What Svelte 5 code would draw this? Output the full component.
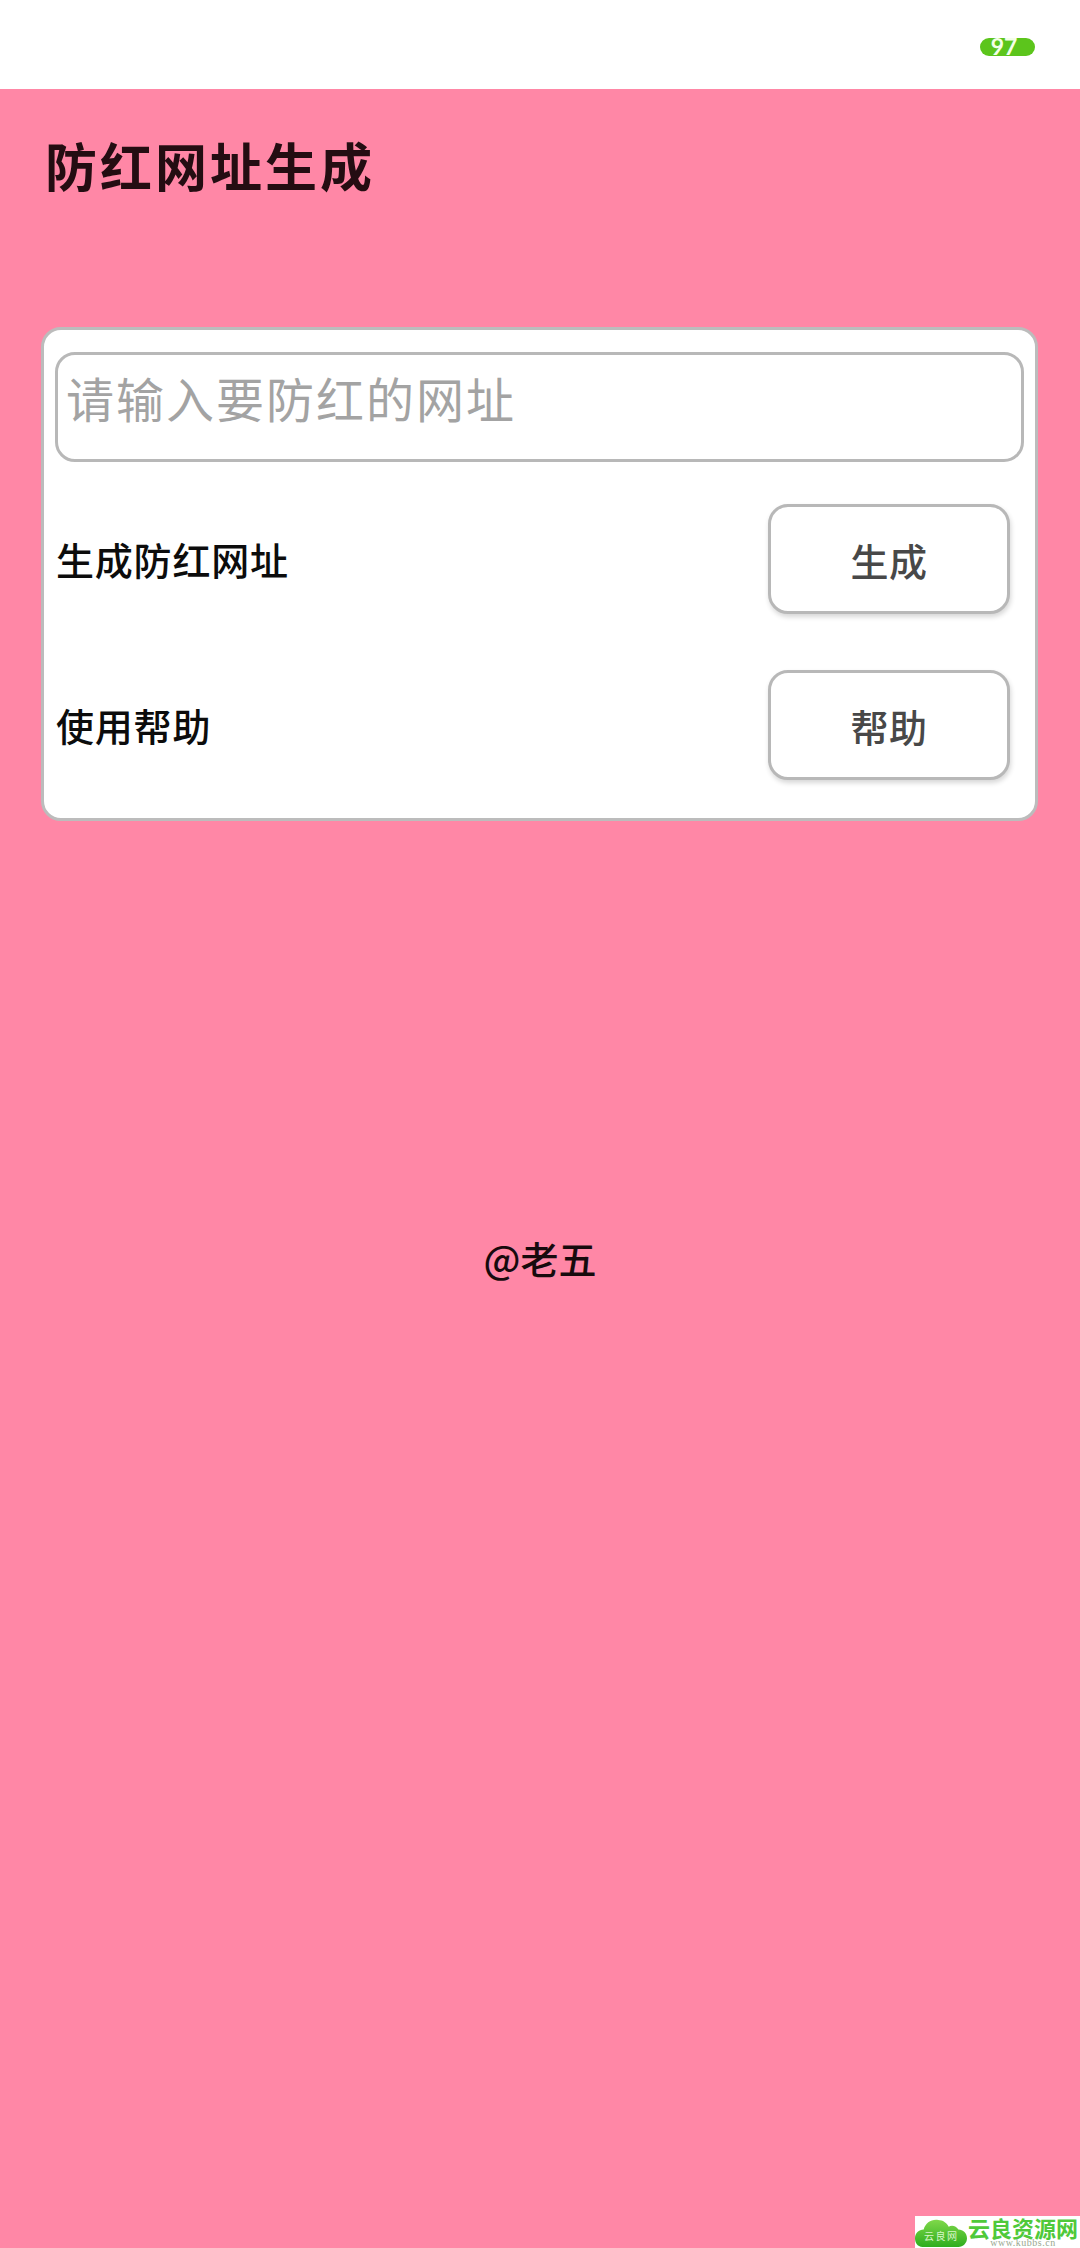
<script>
  let url = "";
</script>

<div class="page">
  <div class="status">
    <span class="battery">97</span>
  </div>

  <h1 class="title">防红网址生成</h1>

  <div class="card">
    <input class="url" type="text" placeholder="请输入要防红的网址" bind:value={url} />
    <div class="row first">
      <span class="label">生成防红网址</span>
      <button class="btn">生成</button>
    </div>
    <div class="row">
      <span class="label">使用帮助</span>
      <button class="btn">帮助</button>
    </div>
  </div>

  <p class="credit">@老五</p>

  <div class="mark">
    <div class="cloud">
      <svg width="54" height="32" viewBox="0 0 54 32">
        <defs>
          <linearGradient id="cl" x1="0" y1="0" x2="0" y2="1">
            <stop offset="0" stop-color="#7fd84a" />
            <stop offset="1" stop-color="#2fae1e" />
          </linearGradient>
        </defs>
        <path d="M8 31C2 31 0 26 0 22C0 17 4 13 9 13C11 6 17 2 24 3C29 3 33 6 35 10C38 8 43 9 45 13C50 13 54 17 54 22C54 27 50 31 45 31Z" fill="url(#cl)" />
      </svg>
      <span class="cloud-text">云良网</span>
    </div>
    <div class="brand">
      <span class="brand-name">云良资源网</span>
      <span class="brand-url">www.kubbs.cn</span>
    </div>
  </div>
</div>

<style>
  :global(body) {
    margin: 0;
    background: #ff87a6;
  }

  .page {
    position: relative;
    width: 1080px;
    height: 2248px;
    overflow: hidden;
    background: #ff87a6;
    font-family: "Noto Sans CJK SC", "Noto Sans", sans-serif;
  }

  .status {
    height: 89px;
    background: #fff;
    display: flex;
    align-items: center;
    justify-content: flex-end;
    padding-right: 45px;
    box-sizing: border-box;
  }

  .battery {
    width: 55px;
    height: 18px;
    margin-top: 5px;
    border-radius: 9px;
    background: #5cc51c;
    color: #f4ffe8;
    font-family: "Lato", sans-serif;
    font-weight: 700;
    font-size: 23px;
    line-height: 17px;
    text-align: center;
    padding-right: 7px;
    box-sizing: border-box;
  }

  .title {
    margin: 0;
    padding: 39px 0 0 45px;
    height: 191px;
    box-sizing: border-box;
    font-size: 52px;
    line-height: 74px;
    font-weight: 700;
    letter-spacing: 3px;
    color: #240d12;
  }

  .card {
    margin: 47px 42px 0 41px;
    height: 494px;
    box-sizing: border-box;
    background: #fff;
    border: 3px solid #bcbcbc;
    border-radius: 20px;
    padding: 22px 11px 0;
  }

  .url {
    display: block;
    width: 969px;
    height: 110px;
    box-sizing: border-box;
    border: 3px solid #b8b8b8;
    border-radius: 20px;
    padding: 0 8px 20px;
    outline: none;
    background: #fff;
    font: inherit;
    font-size: 48px;
    letter-spacing: 2px;
    color: #333;
  }

  .url::placeholder {
    color: #a3a3a3;
    opacity: 1;
  }

  .row {
    display: flex;
    align-items: center;
    justify-content: space-between;
    height: 110px;
    margin-top: 56px;
    padding-right: 14px;
  }

  .row.first {
    margin-top: 42px;
  }

  .label {
    margin-left: 1px;
    margin-top: -2px;
    font-size: 38px;
    font-weight: 500;
    letter-spacing: 0.8px;
    color: #0c0c0c;
  }

  .btn {
    width: 242px;
    height: 110px;
    box-sizing: border-box;
    border: 3px solid #b8b8b8;
    border-radius: 20px;
    background: #fff;
    box-shadow: 1px 3px 5px rgba(0, 0, 0, 0.16);
    font: inherit;
    font-size: 38px;
    font-weight: 500;
    letter-spacing: 0.5px;
    color: #484848;
    padding: 0;
  }

  .credit {
    margin: 411px 0 0;
    text-align: center;
    font-size: 38px;
    line-height: 52px;
    font-weight: 500;
    color: #170a0d;
  }

  .mark {
    position: absolute;
    left: 915px;
    bottom: 0;
    width: 165px;
    height: 32px;
    background: #fff;
    display: flex;
    gap: 1px;
  }

  .cloud {
    position: relative;
    width: 52px;
    height: 32px;
    flex: none;
  }

  .cloud svg {
    display: block;
    width: 52px;
    height: 31px;
    margin-top: 1px;
  }

  .cloud-text {
    position: absolute;
    left: 9px;
    top: 13px;
    font-family: "Noto Sans CJK SC", serif;
    font-size: 10px;
    line-height: 14px;
    letter-spacing: 1.5px;
    color: #d8f5c8;
    white-space: nowrap;
  }

  .brand {
    display: flex;
    flex-direction: column;
    align-items: center;
    min-width: 0;
  }

  .brand-name {
    font-size: 22px;
    line-height: 22px;
    height: 22px;
    font-weight: 700;
    color: #4fc93a;
    white-space: nowrap;
  }

  .brand-url {
    font-family: "Liberation Serif", serif;
    font-size: 10px;
    line-height: 10px;
    letter-spacing: 0.5px;
    color: #9aa88f;
    white-space: nowrap;
  }
</style>
